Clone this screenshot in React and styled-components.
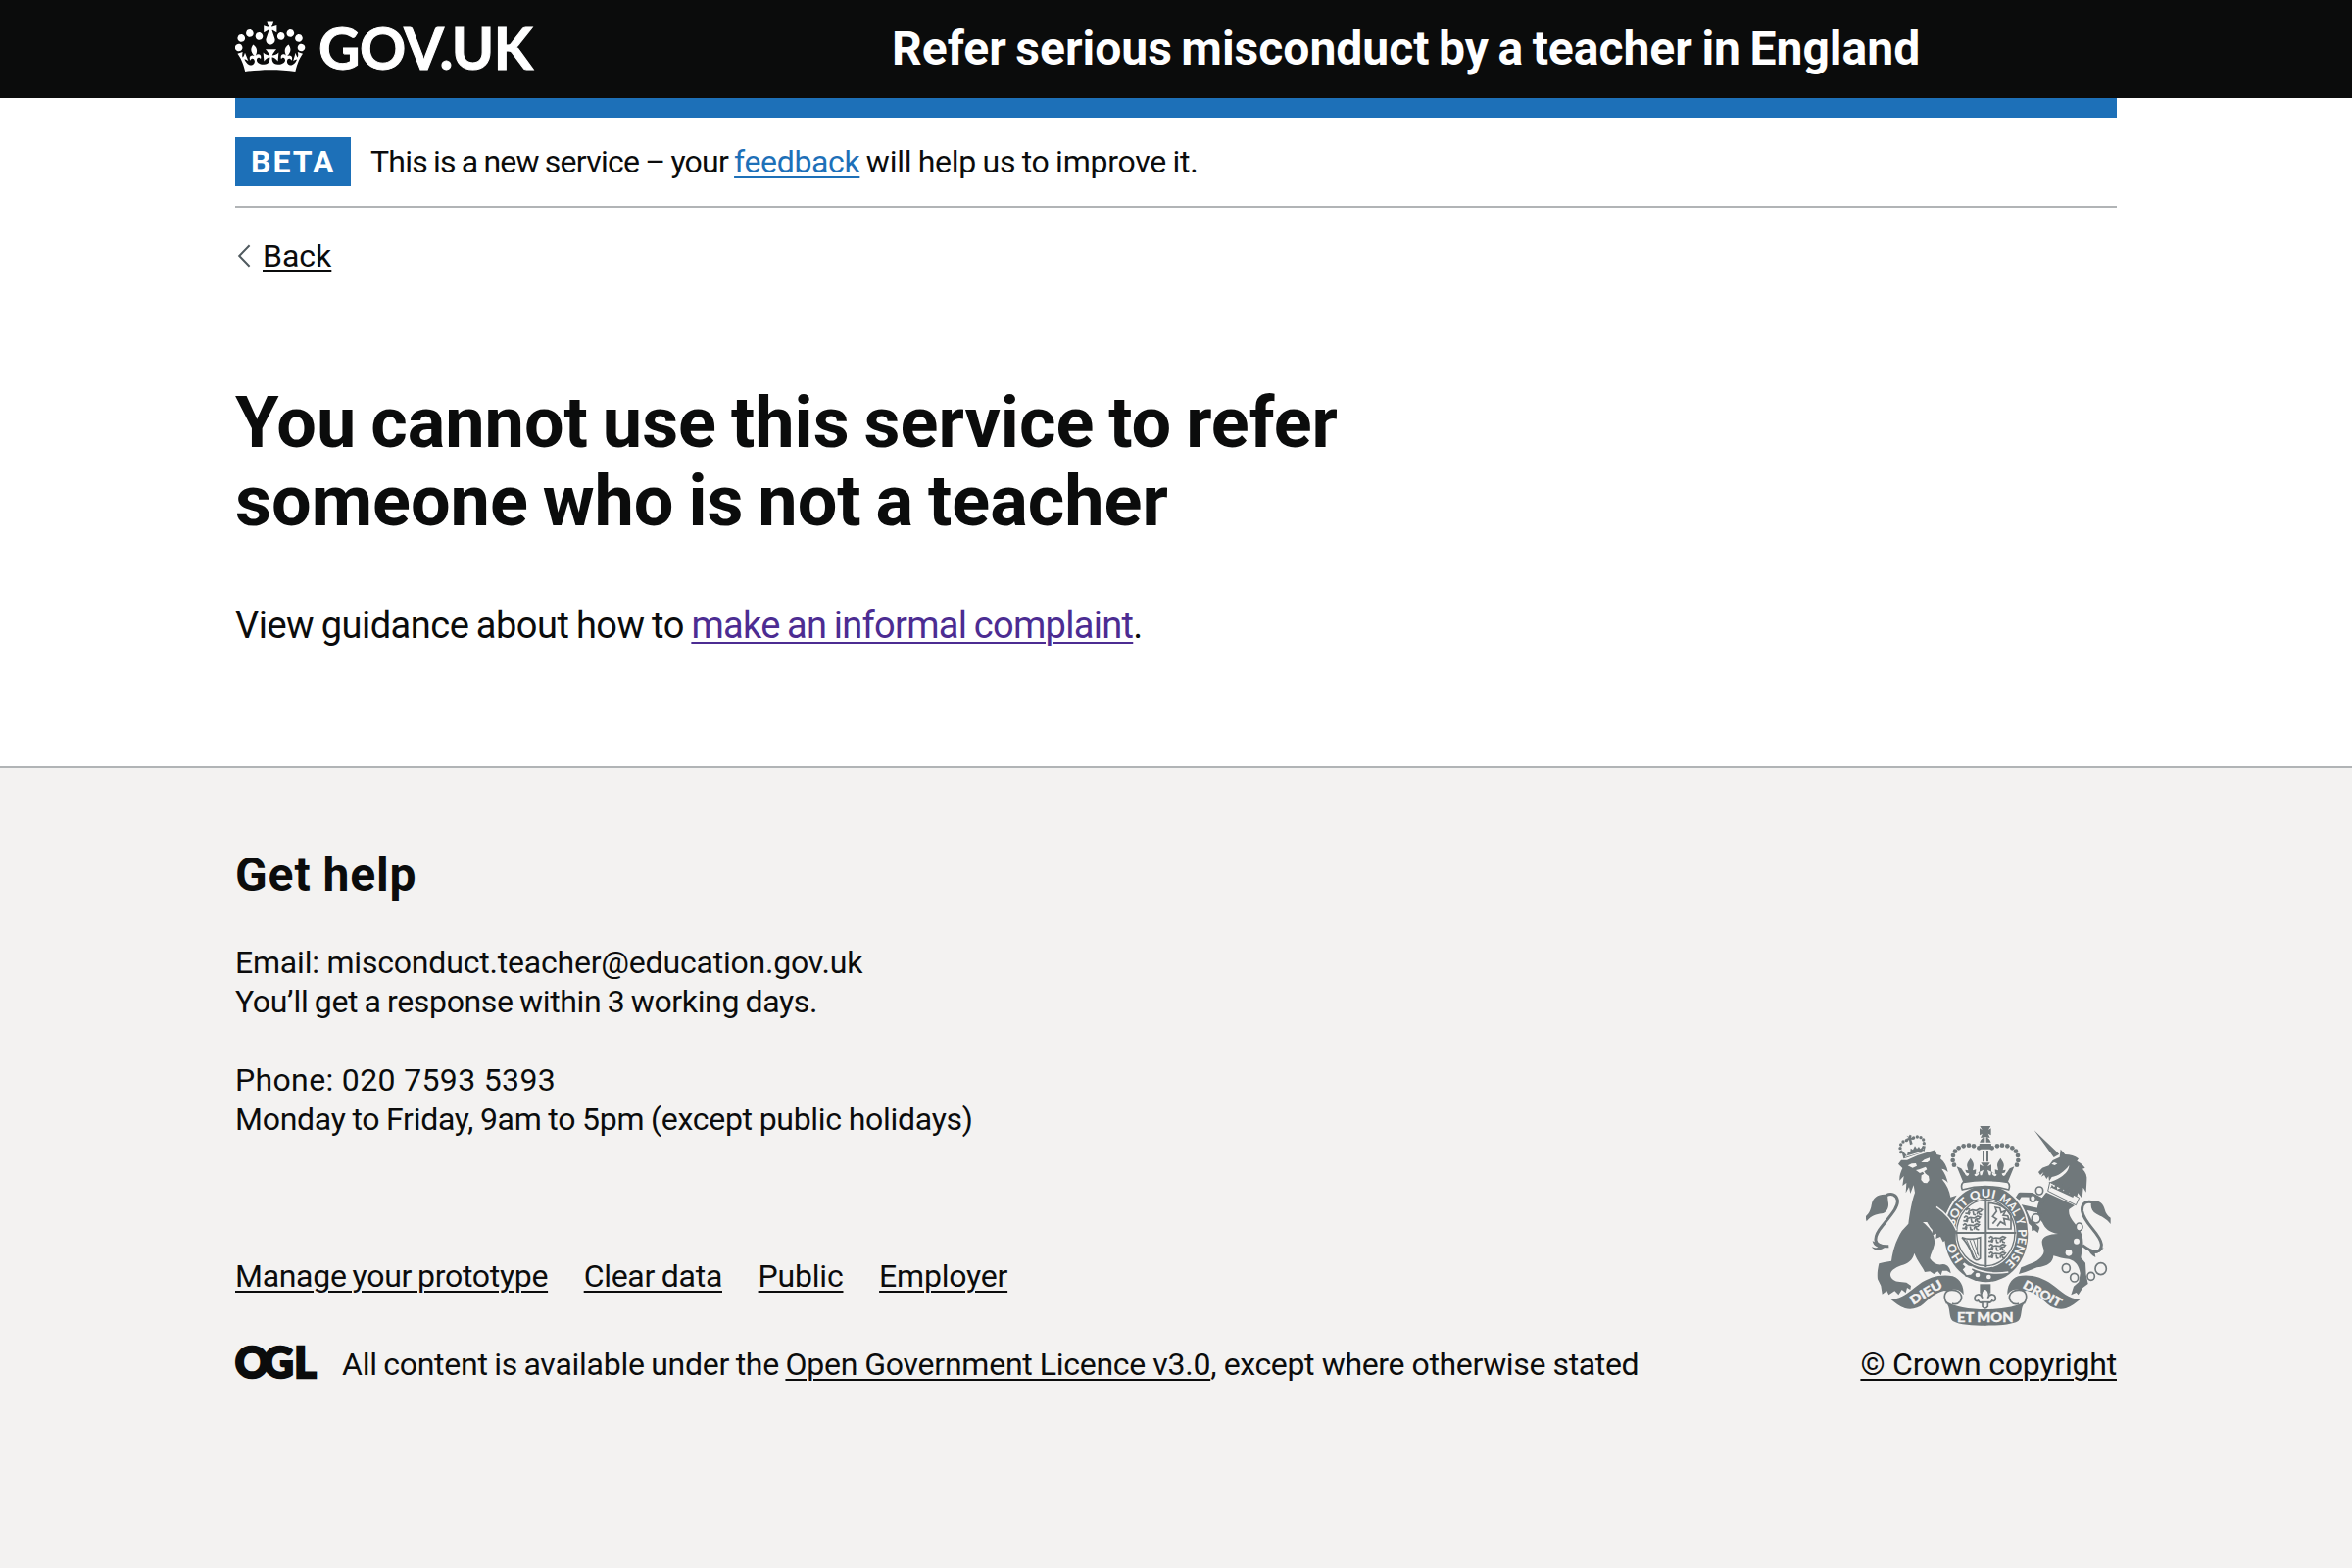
import React from "react";
import styled, { createGlobalStyle } from "styled-components";

const ink = "#0b0c0c";
const blue = "#1d70b8";
const border = "#b1b4b6";
const canvas = "#f3f2f1";
const crestGrey = "#70787b";

const GlobalStyle = createGlobalStyle`
  *, *::before, *::after { box-sizing: border-box; }
  html { background: ${canvas}; }
  body {
    margin: 0;
    color: ${ink};
    background: #fff;
    font-family: Roboto, "Liberation Sans", sans-serif;
    font-size: 32px;
    line-height: 40px;
  }
  h1, h2, p, ul { margin: 0; padding: 0; font-size: inherit; font-weight: inherit; }
`;

const Page = styled.div`
  min-height: 1600px;
  display: flex;
  flex-direction: column;
`;

const Container = styled.div`
  width: 1920px;
  margin: 0 auto;
`;

/* A run of text with its own tracking and word gap. */
const Run = styled.span`
  letter-spacing: ${(p) => p.$ls || 0}px;
  word-spacing: ${(p) => p.$ws || 0}px;
  white-space: pre-wrap;
`;

const Link = styled.a`
  color: ${(p) => p.$color || ink};
  letter-spacing: ${(p) => p.$ls || 0}px;
  word-spacing: ${(p) => p.$ws || 0}px;
  white-space: nowrap;
  text-decoration: underline;
  text-decoration-thickness: 2px;
  text-underline-offset: 4px;
`;

const Header = styled.header`
  height: 100px;
  color: #fff;
  background: ${ink};
`;

const HeaderInner = styled(Container)`
  display: grid;
  grid-template-columns: 670px 1fr;
  height: 100px;
`;

const Logo = styled.a`
  display: flex;
  align-items: flex-start;
  gap: 13px;
  color: #fff;
  padding-top: 13px;
`;

const LogoText = styled.span`
  font-family: Lato, sans-serif;
  font-size: 58.5px;
  font-weight: 700;
  line-height: 70px;
  letter-spacing: -0.5px;
  -webkit-text-stroke: 1px #fff;
`;

const ServiceName = styled.div`
  padding-top: 20px;
  font-size: 48px;
  font-weight: 700;
  line-height: 60px;
  word-spacing: -2.4px;
  white-space: nowrap;
`;

const BlueBar = styled.div`
  height: 20px;
  background: ${blue};
`;

const PhaseBanner = styled.div`
  display: flex;
  align-items: center;
  gap: 20px;
  padding: 20px 0;
  border-bottom: 2px solid ${border};
`;

const Tag = styled.strong`
  width: 118px;
  height: 50px;
  padding-left: 16px;
  color: #fff;
  background: ${blue};
  font-weight: 700;
  line-height: 50px;
  letter-spacing: 2px;
`;

const BackLink = styled.div`
  display: flex;
  align-items: center;
  margin-top: 29px;
  gap: 12px;
  padding-left: 2px;
`;

const Main = styled.main`
  padding: 111px 0 119px;
`;

const Title = styled.h1`
  font-size: 72px;
  font-weight: 700;
  line-height: 80px;
  word-spacing: -3px;
`;

const Body = styled.p`
  margin-top: 61px;
  font-size: 38px;
  line-height: 50px;
`;

const Footer = styled.footer`
  flex: 1;
  padding-top: 79px;
  border-top: 2px solid ${border};
  background: ${canvas};
`;

const FooterTitle = styled.h2`
  font-size: 48px;
  font-weight: 700;
  line-height: 60px;
  letter-spacing: 0.9px;
  word-spacing: -1px;
`;

const FooterPara = styled.p`
  margin-top: ${(p) => p.$gap}px;
`;

const Meta = styled.div`
  display: flex;
  justify-content: space-between;
  align-items: flex-end;
  margin-top: -14px;
`;

const LinkList = styled.ul`
  display: flex;
  gap: 36.6px;
  list-style: none;
`;

const Licence = styled.div`
  display: flex;
  align-items: center;
  gap: 26px;
  margin-top: 50px;
`;

const Copyright = styled.div`
  display: flex;
  flex-direction: column;
  align-items: center;
  gap: 19px;
`;

const Mark = styled.svg`
  overflow: visible;
`;

function Crown() {
  return (
    <svg width="72" height="64" viewBox="0 0 36 32" fill="currentColor" aria-hidden="true">
      <path d="M6.7 12.2c1 .4 2.1-.1 2.5-1s-.1-2.1-1-2.5c-1-.4-2.1.1-2.5 1-.4 1 0 2.1 1 2.5m-4.3 2.5c1 .4 2.1-.1 2.5-1s-.1-2.1-1-2.5c-1-.4-2.1.1-2.5 1-.5 1 0 2.1 1 2.5m-1.3 4.8c1 .4 2.1-.1 2.5-1 .4-1-.1-2.1-1-2.5-1-.4-2.1.1-2.5 1-.4 1 0 2.1 1 2.5m10.4-5.8c1 .4 2.1-.1 2.5-1s-.1-2.1-1-2.5c-1-.4-2.1.1-2.5 1s0 2.1 1 2.5m17.4-1.5c-1 .4-2.1-.1-2.5-1s.1-2.1 1-2.5c1-.4 2.1.1 2.5 1 .5 1 0 2.1-1 2.5m4.3 2.5c-1 .4-2.1-.1-2.5-1s.1-2.1 1-2.5c1-.4 2.1.1 2.5 1 .5 1 0 2.1-1 2.5m1.3 4.8c-1 .4-2.1-.1-2.5-1-.4-1 .1-2.1 1-2.5 1-.4 2.1.1 2.5 1 .4 1 0 2.1-1 2.5m-10.4-5.8c-1 .4-2.1-.1-2.5-1s.1-2.1 1-2.5c1-.4 2.1.1 2.5 1s0 2.1-1 2.5m-5.3-4.9 2.4 1.3V6.5l-2.4.8c-.1-.1-.1-.1-.2-.1s1-3 1-3h-3.4l1 3c-.1.1-.2.1-.2.1-.1.1-2.4-.7-2.4-.7v3.5L17 8.8c.1.1.1.2.2.3l-1.4 4.2c-.1.2-.1.4-.1.7 0 1.1.8 2.1 1.9 2.2h.8c1.1-.2 1.9-1.1 1.9-2.2 0-.2 0-.4-.1-.7l-1.4-4.2c.1-.1.1-.2.1-.3m-1 20.3c4.6 0 8.9.3 12.8.9 1.1-4.6 2.4-7.2 3.8-9.1l-2.6-.9c.3 1.3.3 1.9 0 2.8-.4-.4-.8-1.2-1.1-2.4l-1.2 4.2c.8-.5 1.3-.9 2-.9-1.2 2.6-2.7 3.2-3.6 3-1.2-.2-1.7-1.3-1.5-2.2.3-1.3 1.6-1.6 2.2-.1 1.2-2.4-.8-3.1-2.1-2.4 1.9-1.9 2.2-3.6.6-5.7-2.2 1.7-2.2 3.3-1.2 5.6-1.3-1.5-3.3-.7-2.5 1.7.9-1.4 2.1-.5 2 .8-.2 1.2-1.7 2.1-3.7 2-2.8-.2-3-2.1-3-3.7.7-.1 1.9.5 3 2l.4-4.4c-1.1 1.2-2.2 1.4-3.3 1.4.4-1.2 2.1-3.1 2.1-3.1h-5.5s1.8 1.9 2.1 3.1c-1.1 0-2.2-.2-3.3-1.4l.4 4.4c1.1-1.5 2.3-2.1 3-2-.1 1.6-.2 3.5-3 3.7-1.9.2-3.5-.8-3.7-2-.2-1.3 1-2.2 2-.8.7-2.4-1.3-3.1-2.6-1.7 1-2.3 1-4-1.2-5.6-1.6 2.1-1.3 3.8.6 5.7-1.3-.7-3.2 0-2.1 2.4.6-1.5 1.9-1.1 2.2.1.2.9-.4 1.9-1.5 2.2-1 .2-2.5-.5-3.7-3 .7 0 1.3.3 2 .9L5 20.4c-.3 1.2-.7 1.9-1.2 2.4-.3-.8-.2-1.5 0-2.8l-2.6.9C2.7 22.9 4 25.4 5.1 30c3.8-.5 8.2-.9 12.7-.9" />
    </svg>
  );
}

function Chevron() {
  return (
    <svg width="14" height="24" viewBox="0 0 14 24" fill="none" stroke="#505a5f" strokeWidth="2" aria-hidden="true">
      <path d="M12.6 1.2 2.2 12l10.4 10.8" />
    </svg>
  );
}

function OglMark() {
  return (
    <Mark width="83" height="38" viewBox="0 0 83 38" fill={ink} stroke={ink} strokeWidth="2.4" aria-label="OGL">
      <text x="-0.2 28.6 60.3" y="33" fontFamily="Lato, sans-serif" fontWeight="900" fontSize="43">OGL</text>
    </Mark>
  );
}

const arch = [[388, 98], [372, 92], [357, 90], [341, 92], [326, 98], [315, 108], [309, 121], [308, 136], [312, 150]];
const smallPearls = [[149, 111], [147, 99], [149, 88], [156, 79], [166, 75], [188, 67], [199, 64], [210, 66], [218, 73], [220, 84], [218, 96]];
const chain = [[573, 229, 11], [553, 252, 9], [563, 314, 13], [655, 466, 12], [680, 495, 12], [731, 491, 11], [761, 468, 17]];
const motto = [["HO", 12, 60], ["SOIT", 28.5, 86], ["QUI", 43, 72], ["MAL", 56, 70], ["Y", 68, 20], ["PENSE", 72.8, 116]];

function HalfCrown() {
  return (
    <g>
      {arch.map(([x, y]) => <circle key={x} cx={x} cy={y} r="7" />)}
      <path d="M320 155l14 6 8 12 8 6-4-14 9 2-3-12c-2-10 4-16 10-26 7 10 12 17 9 27l-2 11 10-3-1 14 12-8 2 12h17v24h-68z" />
      <path d="M352 184q-9-4-8-15 7 8 14 7 0 8-6 8zM374 178q8 0 13-6 3 9-8 13-6-1-5-7z" fill={canvas} />
    </g>
  );
}

function RibbonCurl() {
  return (
    <g>
      <path d="M116 560c35 3 55-20 88-44 31-22 68-32 104-25 24 8 34 32 33 57-10-17-26-22-50-11l-9-2c-29 8-43 21-63 40-17 15-39 19-57 14-18-6-30-16-46-29z" />
      <path d="M290 575c-13-21-8-41 14-42 25-1 37 18 27 34-7 9-17 10-25 7" fill={canvas} stroke={crestGrey} strokeWidth="5" />
      <path d="M284 565C310 585 360 592 409 592V642C370 642 328 640 308 628C296 618 300 592 293 580Z" />
    </g>
  );
}

function WalkingLion({ x, y }) {
  return (
    <g transform={`translate(${x} ${y})`} fill="none" stroke={crestGrey} strokeWidth="5">
      <path d="M0 17l8 1 4-8 10-3 12 2 10-6 8 3-4 5-7 1 3 8 7 2M14 13l-3 9M24 11l2 10 6 1M38 12l-2 9M2 8l6-5 6 3" />
    </g>
  );
}

function RoyalArms() {
  return (
    <svg width="250" height="205" viewBox="42 28 750 615" fill={crestGrey} aria-hidden="true">
      <defs>
        <path id="garter" d="M410 472A98 111 0 0 1 410 250A98 111 0 0 1 410 472" />
      </defs>

      {/* lion */}
      <path d="M141 147L150 135L168 135L200 121L254 104L259 118L273 122L270 131C282 140 290 155 293 172C285 164 280 162 274 162C284 176 290 190 293 205C286 196 280 193 275 194C290 212 298 230 301 249L320 243L300 275L284 306L262 318L240 325L216 325C240 345 254 365 252 390C250 408 240 420 238 436C248 452 262 458 278 454C294 456 300 466 302 482L290 474L276 474L272 488L262 476L250 484L238 476L222 478C216 462 200 446 190 420C186 440 172 452 150 458C128 466 116 476 117 488C119 500 130 508 146 508L166 510L180 520L178 532L168 526L164 542L152 532L142 548L130 536L112 548L106 536L92 546L88 520L78 500C76 484 78 470 82 452L98 448L120 444C124 415 132 385 152 352L172 330C176 300 182 262 192 235L188 212L178 238L174 218L164 236L166 205L154 214L158 184L145 198C144 184 148 172 154 160Z" />
      <path d="M170 152l12-6 13-1 3 8-13 6zM211 142l10-8 16-6v9l-7 5zM195 166l10-2 20-8 4 8-9 6 5 7 9 7 2 13-7 9-10-1-8-9 1-14 8-5-4-6-9 4z" fill={canvas} />
      <path d="M150 103l18 19 2-11 8-2 1-10 7 5 6-12 6 9 6-7 4 7 8-6 2 9 7-16-4 22-54 18-10 3zM166 60l7 3 3-6 6 3-2 6 7-1 1 8-7-1 4 14-8 3-3-15-7 3-1-8 7-2z" />
      {smallPearls.map(([x, y]) => <circle key={`${x}-${y}`} cx={x} cy={y} r="5" />)}
      <path d="M162 125l58-17" stroke={canvas} strokeWidth="3" />
      <path d="M112 399C62 402 63 372 92 337C119 303 142 278 139 258C136 241 120 235 105 243" fill="none" stroke={crestGrey} strokeWidth="9" />
      <path d="M108 241c-27-3-45 8-49 32-3 17-8 25-19 36l4 14c14-18 30-22 46-24 17-3 24-21 20-37zM98 398l-36-15c2 10 8 16 17 19-9 3-14 1-20-1 11 14 29 14 46-3z" />

      {/* unicorn */}
      <path d="M557 44l77 73-17 10zM638 102l14 16c16 0 29 3 41 13l-5 7c11 5 19 12 25 21l-8 3c10 10 15 22 13 36l-2 36-9-15-3 34-13-17-4 15-86-47c12-4 24-8 38-17 15-10 25-22 25-36-14 20-36 34-53 36l-8 13-2-15-6 8-7-12-9 5 7-14-10 9-6-9 12-13 20-7 12-16 21-10z" />
      <path d="M610 147l8-5 10 4-8 5z" fill={canvas} />
      <path d="M605 203l90 48-10 22-86-43z" fill={canvas} stroke={crestGrey} strokeWidth="3" />
      <path d="M607 224l4-14 7 8 8-9 2 16 9-4 6-11 3 20 11-6 6-6 2 20 10-7 8 1-7 18-70-32z" />
      <path d="M594 234L681 274L664 286C660 308 680 326 692 342C704 358 708 378 706 398L700 434L714 450L716 486L722 514L706 526L692 548L686 541L670 548L678 522L694 508L698 482C694 458 684 444 664 438C648 438 630 432 616 428C614 448 600 460 566 464L530 478L510 484L517 464C545 452 572 446 584 424C592 410 580 400 581 384C584 368 602 362 630 361C606 358 590 346 582 326C568 312 560 290 572 262Z" />
      <path d="M588 262L550 242L514 241L506 254M582 292L521 279L540 320L568 345" fill="none" stroke={crestGrey} strokeWidth="14" strokeLinejoin="round" />
      <path d="M548 326l26 16-5 16-11-8-8 2z" />
      <path d="M705 396C742 425 764 419 763 393C760 361 710 330 704 292C701 269 716 257 739 265" fill="none" stroke={crestGrey} strokeWidth="9" />
      <path d="M733 260c22-4 35 8 40 26 3 13 10 21 18 26v19c-13-18-28-23-43-31-16-8-20-24-15-40zM721 404c13 9 29 11 49-1-8 12-18 18-27 18l2 12c-13-5-21-16-24-29z" />
      {chain.map(([x, y, r]) => (
        <ellipse key={`${x}-${y}`} cx={x} cy={y} rx={r} ry={r + 1} fill={canvas} stroke={crestGrey} strokeWidth="5" />
      ))}
      <ellipse cx="695" cy="340" rx="10" ry="12" fill={canvas} stroke={crestGrey} strokeWidth="5" />
      <circle cx="687" cy="384" r="9" fill={canvas} />
      <circle cx="663" cy="419" r="10" fill={canvas} />

      {/* garter and shield */}
      <ellipse cx="410" cy="361" rx="133" ry="154" fill={canvas} />
      <ellipse cx="410" cy="361" rx="128" ry="148" />
      <ellipse cx="409" cy="359" rx="94" ry="106" fill={canvas} />
      <ellipse cx="409" cy="358" rx="89" ry="101" fill="none" stroke={crestGrey} strokeWidth="4" />
      <path d="M409 252v212M316 358h186" stroke={crestGrey} strokeWidth="6" />
      {[[346, 281], [340, 304], [337, 327], [417, 366], [417, 390], [417, 414]].map(([x, y]) => (
        <WalkingLion key={`${x}-${y}`} x={x} y={y} />
      ))}
      <path d="M418 266v80h68v-42q-18-34-68-38zM430 330l12-14-12-8 12-16-4-12 14 2 4 14 14-6-8 14 14 2 4 12-16-4 4 18-14-8-10 14" fill="none" stroke={crestGrey} strokeWidth="5" />
      <path d="M336 372q26 10 56 0v64q-16 12-22-4-10-34-34-60z" fill="none" stroke={crestGrey} strokeWidth="5" />
      <path d="M350 379l26 58M360 380l22 56M371 379l16 50M383 376v48" stroke={crestGrey} strokeWidth="3" />
      <g fill={canvas} fontFamily="Lato, sans-serif" fontWeight="900" fontSize="36">
        {motto.map(([word, at, len]) => (
          <text key={word} textLength={len} lengthAdjust="spacingAndGlyphs">
            <textPath href="#garter" startOffset={`${at}%`} textLength={len} lengthAdjust="spacingAndGlyphs">{word}</textPath>
          </text>
        ))}
      </g>
      <path d="M343 446l-8 8 8 8-8 8 14 20 16-2 12-12-8-6 4-10-16-4z" fill={canvas} stroke={crestGrey} strokeWidth="5" />
      <path d="M366 464c36 18 74 20 112 14" fill="none" stroke={canvas} strokeWidth="5" />
      <circle cx="384" cy="487" r="7" fill={canvas} />
      <circle cx="418" cy="493" r="7" fill={canvas} />
      <path d="M240 262L258 278C290 302 308 326 318 352L316 386L304 377L300 392L290 378L278 386L270 370L256 376L258 360L243 366L246 350L238 340L226 320Z" />
      <path d="M258 278C290 300 308 324 319 350" fill="none" stroke={canvas} strokeWidth="4" />

      {/* crown */}
      <path d="M391 31h33l-7 12 8-5v21l-9-5 6 12h-29l6-12-9 5V38l8 5z" />
      <path d="M389 102c-2-24 7-36 19-38 11 2 20 14 18 38z" />
      <path d="M386 83h44M408 64v18" stroke={canvas} strokeWidth="4" />
      <HalfCrown />
      <g transform="translate(816 0) scale(-1 1)"><HalfCrown /></g>
      <path d="M399 106h6v34h-6zM411 106h6v34h-6z" />
      <path d="M394 143h28l-8 12 12-6v22l-12-6 6 20h-24l6-20-12 6v-22l12 6z" />
      <path d="M340 203q68-11 136 0 9 8 3 23-71-20-142 0-6-15 3-23z" fill={canvas} stroke={crestGrey} strokeWidth="5" />

      {/* pendant and ribbons */}
      <path d="M391 515h33v28h-33z" />
      <path d="M407 527c13 10 14 21 8 31 8-18 24-12 24 1 0 7-6 10-11 6-3 8-10 7-13 7v12q-8 10-16 0v-12c-4 0-10 1-13-7-5 4-11 1-11-6 0-13 17-19 24-1-6-10-5-21 8-31z" fill={canvas} stroke={crestGrey} strokeWidth="5" />
      <path d="M394 570h28" stroke={crestGrey} strokeWidth="5" />
      <RibbonCurl />
      <g transform="translate(816 0) scale(-1 1)"><RibbonCurl /></g>
      <g fill={canvas} stroke={canvas} strokeWidth="1" fontFamily="Lato, sans-serif" fontWeight="900" fontSize="38">
        <text transform="translate(187 579) rotate(-31)" textLength="108" lengthAdjust="spacingAndGlyphs">DIEU</text>
        <text x="321" y="631" fontSize="42" textLength="173" lengthAdjust="spacingAndGlyphs">ET MON</text>
        <text transform="translate(520 525) rotate(29)" textLength="128" lengthAdjust="spacingAndGlyphs">DROIT</text>
      </g>
    </svg>
  );
}

export default function App() {
  return (
    <Page>
      <GlobalStyle />
      <Header>
        <HeaderInner>
          <Logo>
            <Crown />
            <LogoText>GOV.UK</LogoText>
          </Logo>
          <ServiceName>Refer serious misconduct by a teacher in England</ServiceName>
        </HeaderInner>
      </Header>
      <Container>
        <BlueBar />
        <PhaseBanner>
          <Tag>BETA</Tag>
          <p>
            <Run $ls={-0.75} $ws={-1.2}>{"This is a new service – your "}</Run>
            <Link $color={blue} $ls={-0.35}>feedback</Link>
            <Run $ls={-0.25} $ws={-1.2}>{" will help us to improve it."}</Run>
          </p>
        </PhaseBanner>
        <BackLink>
          <Chevron />
          <Link>Back</Link>
        </BackLink>
        <Main>
          <Title>
            You cannot use this service to refer
            <br />
            someone who is not a teacher
          </Title>
          <Body>
            <Run $ls={-0.5} $ws={-1.4}>{"View guidance about how to "}</Run>
            <Link $color="#4c2c92" $ls={-0.7} $ws={-1.3}>make an informal complaint</Link>.
          </Body>
        </Main>
      </Container>
      <Footer>
        <Container>
          <FooterTitle>Get help</FooterTitle>
          <FooterPara $gap={39}>
            <Run $ls={-0.2}>Email: misconduct.teacher@education.gov.uk</Run>
            <br />
            <Run $ls={-0.35} $ws={-1.2}>You’ll get a response within 3 working days.</Run>
          </FooterPara>
          <FooterPara $gap={40}>
            <Run $ls={0.35}>Phone: 020 7593 5393</Run>
            <br />
            <Run $ls={-0.28} $ws={-0.8}>Monday to Friday, 9am to 5pm (except public holidays)</Run>
          </FooterPara>
          <Meta>
            <div>
              <LinkList>
                <li><Link $ls={-0.3} $ws={-1.6}>Manage your prototype</Link></li>
                <li><Link $ls={-0.3} $ws={-0.8}>Clear data</Link></li>
                <li><Link $ls={-0.2}>Public</Link></li>
                <li><Link $ls={-0.22}>Employer</Link></li>
              </LinkList>
              <Licence>
                <OglMark />
                <p>
                  <Run $ls={-0.25} $ws={-1.2}>{"All content is available under the "}</Run>
                  <Link $ls={-0.25} $ws={-0.5}>Open Government Licence v3.0</Link>
                  <Run $ls={-0.37}>, except where otherwise stated</Run>
                </p>
              </Licence>
            </div>
            <Copyright>
              <RoyalArms />
              <Link $ls={-0.2}>© Crown copyright</Link>
            </Copyright>
          </Meta>
        </Container>
      </Footer>
    </Page>
  );
}
